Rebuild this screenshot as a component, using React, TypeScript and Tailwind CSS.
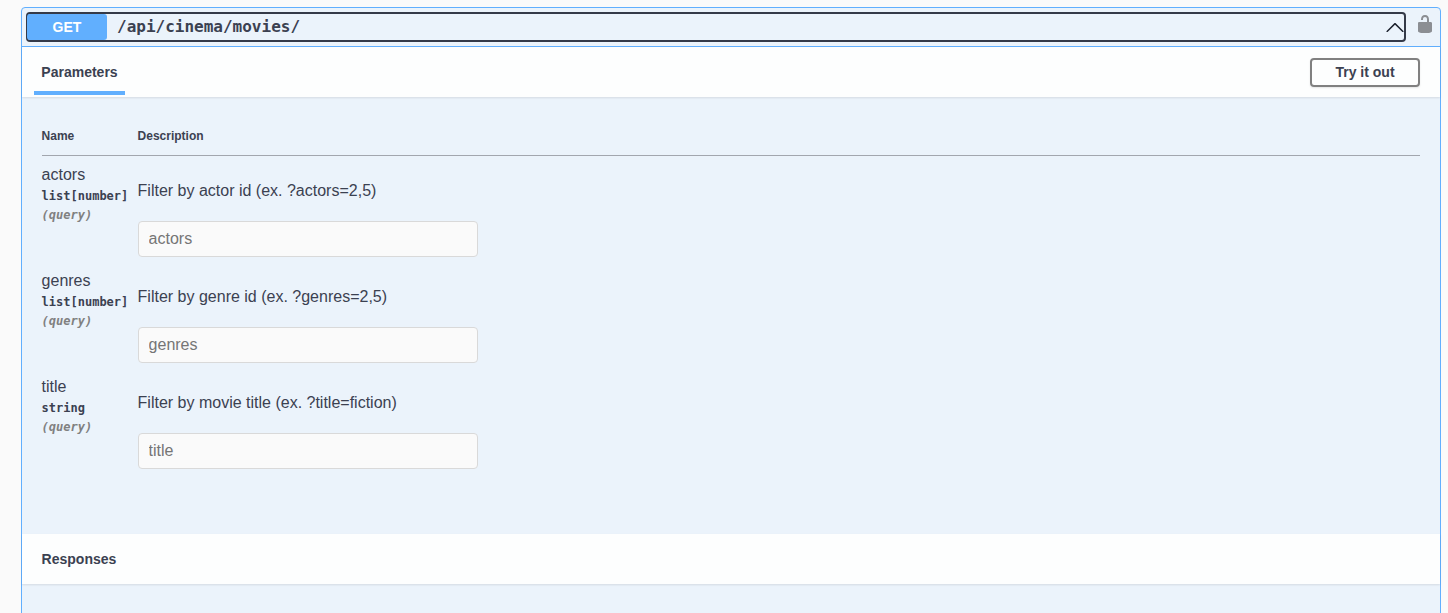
const sans = "font-['Liberation_Sans',Arial,sans-serif]";
const mono = "font-['DejaVu_Sans_Mono','Liberation_Mono',monospace]";

const params = [
  { name: "actors", type: "list[number]", desc: "Filter by actor id (ex. ?actors=2,5)" },
  { name: "genres", type: "list[number]", desc: "Filter by genre id (ex. ?genres=2,5)" },
  { name: "title", type: "string", desc: "Filter by movie title (ex. ?title=fiction)" },
];

function Row({ name, type, desc }: { name: string; type: string; desc: string }) {
  return (
    <div className="flex h-[106px]">
      <div className="w-[96px] shrink-0 pt-[9px]">
        <div className="text-[16px] leading-[20px] text-[#3b4151]">{name}</div>
        <div className={`${mono} mt-[1px] text-[12px] leading-[20px] font-bold text-[#3b4151] whitespace-nowrap`}>{type}</div>
        <div className={`${mono} text-[12px] leading-[18px] italic font-bold text-[#808080]`}>(query)</div>
      </div>
      <div className="flex-1 pt-[25px]">
        <div className="text-[16px] leading-[20px] text-[#3b4151]">{desc}</div>
        <input
          placeholder={name}
          readOnly
          className="mt-[20px] block h-[36px] w-[340px] rounded-[4px] border border-[#d9d9d9] bg-[#fafafa] px-[10px] text-[16px] text-[#3b4151] placeholder:text-[#757575] outline-none"
        />
      </div>
    </div>
  );
}

export default function App() {
  return (
    <div className={`${sans} h-[613px] overflow-hidden bg-[#fafafa] pt-[7px] pl-[21px] pr-[7px]`}>
      <div className="h-[620px] rounded-[4px] border border-[#61affe] bg-[#ebf3fb]">
        <div className="flex h-[39px] items-start border-b border-[#61affe] pl-[4px] pr-[5px] pt-[4px]">
          <div className="flex h-[30px] flex-1 items-center rounded-[4px] border-2 border-[#343a48]">
            <div className="-ml-[1px] flex h-[26px] w-[80px] items-center justify-center rounded-[3px] bg-[#61affe] text-[14px] font-bold text-white">GET</div>
            <div className={`${mono} ml-[10px] flex-1 text-[16px] font-semibold text-[#3b4151]`}>/api/cinema/movies/</div>
            <svg width="20" height="20" viewBox="0 0 20 20" className="-mr-[1px] text-[#1a1f2b]" fill="currentColor">
              <path d="M 17.418 14.908 C 17.69 15.176 18.127 15.176 18.397 14.908 C 18.667 14.64 18.668 14.207 18.397 13.939 L 10.489 6.109 C 10.219 5.841 9.782 5.841 9.51 6.109 L 1.602 13.939 C 1.332 14.207 1.332 14.64 1.602 14.908 C 1.873 15.176 2.311 15.176 2.581 14.908 L 10 7.872 Z" />
            </svg>
          </div>
          <svg width="20" height="20" viewBox="0 0 20 20" className="ml-[9px] mt-[2px] shrink-0 text-[#8b8e93]" fill="currentColor">
            <path d="M15.8 8H14V5.6C14 2.703 12.665 1 10 1 7.334 1 6 2.703 6 5.6V6h2v-.801C8 3.754 8.797 3 10 3c1.203 0 2 .754 2 2.199V8H4c-.553 0-1 .646-1 1.199V17c0 .549.428 1.139.951 1.307l1.197.387C5.672 18.861 6.55 19 7.1 19h5.8c.549 0 1.428-.139 1.951-.307l1.196-.387c.524-.167.953-.757.953-1.306V9.199C17 8.646 16.352 8 15.8 8z" />
          </svg>
        </div>

        <div className="flex h-[50px] items-start justify-between bg-[#fdfefe] pl-[12px] pr-[20px] shadow-[0_1px_2px_rgba(0,0,0,0.1)]">
          <div className="flex h-[48px] w-[91px] items-center justify-center border-b-4 border-[#61affe] pt-[6px] text-[14px] font-bold text-[#3b4151]">Parameters</div>
          <button className="mt-[11px] h-[29px] w-[110px] rounded-[4px] border-2 border-[#808080] bg-transparent text-[14px] font-bold text-[#3b4151] shadow-[0_1px_2px_rgba(0,0,0,0.1)]">Try it out</button>
        </div>

        <div className="pl-[19.6px] pr-[20px] pt-[31px]">
          <div className="flex h-[28px] border-b border-[#a2a6ae] text-[12px] font-bold leading-[16px] text-[#3b4151]">
            <div className="w-[96px]">Name</div>
            <div>Description</div>
          </div>
          {params.map((p) => (
            <Row key={p.name} {...p} />
          ))}
        </div>

        <div className="mt-[60px] flex h-[50px] items-center bg-[#fdfefe] pl-[19.6px] text-[14px] font-bold text-[#3b4151] shadow-[0_1px_2px_rgba(0,0,0,0.1)]">Responses</div>
      </div>
    </div>
  );
}
